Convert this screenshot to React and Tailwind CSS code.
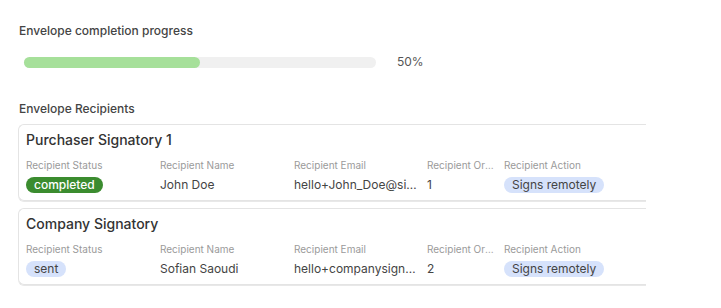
import React from 'react';

const recipients = [
  {
    title: 'Purchaser Signatory 1',
    status: 'completed',
    name: 'John Doe',
    email: 'hello+John_Doe@signatory.com',
    order: '1',
    action: 'Signs remotely',
  },
  {
    title: 'Company Signatory',
    status: 'sent',
    name: 'Sofian Saoudi',
    email: 'hello+companysignatory@example.com',
    order: '2',
    action: 'Signs remotely',
  },
];

const Field = ({ label, width, children }) => (
  <div className={`flex min-w-0 flex-col pr-[6px] ${width}`}>
    <div className="truncate text-[10px] leading-[14px] text-[#9a9a9a]">{label}</div>
    <div className="mt-[4px] flex h-[18px] min-w-0 items-center">{children}</div>
  </div>
);

const RecipientCard = ({ r }) => (
  <div className="w-[628px] rounded-l-md border border-r-0 border-[#e4e4e4] pb-[6px] pl-[7px] pt-[6px] shadow-[0_1px_0_#e8e8e8]">
    <h3 className="text-[14px] font-medium leading-[18px] text-[#333]">{r.title}</h3>
    <div className="mt-[9px] flex">
      <Field label="Recipient Status" width="w-[134px]">
        {r.status === 'completed' ? (
          <span className="rounded-full bg-[#3b8c2f] px-[8px] text-[12px] font-medium leading-[16px] text-white">
            completed
          </span>
        ) : (
          <span className="rounded-full bg-[#d6e2fb] px-[8px] text-[12px] leading-[16px] text-[#444]">
            sent
          </span>
        )}
      </Field>
      <Field label="Recipient Name" width="w-[134px]">
        <span className="text-[12px] text-[#444]">{r.name}</span>
      </Field>
      <Field label="Recipient Email" width="w-[133px]">
        <span className="block min-w-0 truncate text-[12px] text-[#444]">{r.email}</span>
      </Field>
      <Field label="Recipient Order" width="w-[77px]">
        <span className="text-[12px] text-[#444]">{r.order}</span>
      </Field>
      <Field label="Recipient Action" width="w-[120px]">
        <span className="rounded-full bg-[#d6e2fb] px-[8px] text-[12px] leading-[16px] text-[#444]">
          {r.action}
        </span>
      </Field>
    </div>
  </div>
);

export default function App() {
  return (
    <div className="h-[308px] w-[721px] bg-white pl-[18px] pt-[23px]" style={{ fontFamily: 'Inter, "Noto Sans", sans-serif' }}>
      <h2 className="pl-[1px] text-[12px] font-medium leading-[16px] text-[#444]">Envelope completion progress</h2>
      <div className="mt-[14px] flex items-center pl-[6px]">
        <div className="h-[11px] w-[352px] rounded-full bg-[#f0f0f0]">
          <div className="h-full rounded-full bg-[#a6e09a]" style={{ width: '50%' }} />
        </div>
        <span className="ml-[21px] text-[12px] text-[#555]">50%</span>
      </div>
      <h2 className="mt-[30px] pl-[1px] text-[12px] font-medium leading-[16px] text-[#444]">Envelope Recipients</h2>
      <div className="mt-[7px] flex flex-col gap-[7px]">
        {recipients.map((r) => (
          <RecipientCard key={r.title} r={r} />
        ))}
      </div>
    </div>
  );
}
